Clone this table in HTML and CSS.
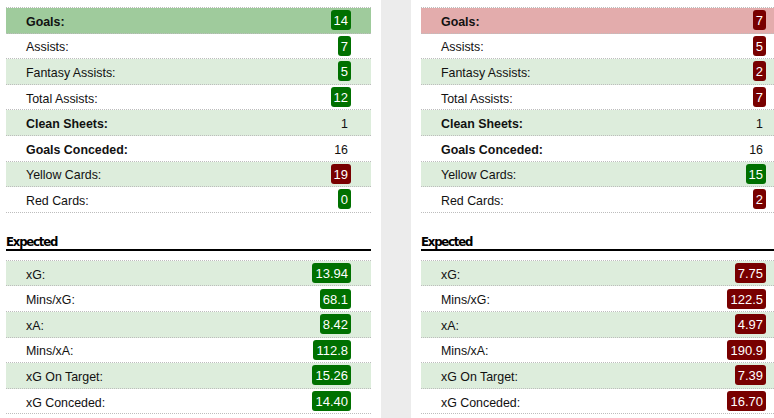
FILE: index.html
```html
<!DOCTYPE html>
<html lang="en">
<head>
    <meta charset="UTF-8">
    <meta name="viewport" content="width=device-width, initial-scale=1.0">
    <title>Player Comparison</title>
    <link rel="stylesheet" href="styles.css">
</head>
<body>
    <div class="compare">
        <!-- Player one -->
        <section class="player">
            <div class="stat-list">
                <div class="stat-row top-good bold"><span>Goals:</span><span class="badge good">14</span></div>
                <div class="stat-row"><span>Assists:</span><span class="badge good">7</span></div>
                <div class="stat-row alt"><span>Fantasy Assists:</span><span class="badge good">5</span></div>
                <div class="stat-row"><span>Total Assists:</span><span class="badge good">12</span></div>
                <div class="stat-row alt bold"><span>Clean Sheets:</span><span class="plain">1</span></div>
                <div class="stat-row bold"><span>Goals Conceded:</span><span class="plain">16</span></div>
                <div class="stat-row alt"><span>Yellow Cards:</span><span class="badge bad">19</span></div>
                <div class="stat-row"><span>Red Cards:</span><span class="badge good">0</span></div>
            </div>

            <h3 class="section-title">Expected</h3>
            <div class="stat-list">
                <div class="stat-row alt"><span>xG:</span><span class="badge good">13.94</span></div>
                <div class="stat-row"><span>Mins/xG:</span><span class="badge good">68.1</span></div>
                <div class="stat-row alt"><span>xA:</span><span class="badge good">8.42</span></div>
                <div class="stat-row"><span>Mins/xA:</span><span class="badge good">112.8</span></div>
                <div class="stat-row alt"><span>xG On Target:</span><span class="badge good">15.26</span></div>
                <div class="stat-row"><span>xG Conceded:</span><span class="badge good">14.40</span></div>
            </div>
        </section>

        <!-- Player two -->
        <section class="player">
            <div class="stat-list">
                <div class="stat-row top-bad bold"><span>Goals:</span><span class="badge bad">7</span></div>
                <div class="stat-row"><span>Assists:</span><span class="badge bad">5</span></div>
                <div class="stat-row alt"><span>Fantasy Assists:</span><span class="badge bad">2</span></div>
                <div class="stat-row"><span>Total Assists:</span><span class="badge bad">7</span></div>
                <div class="stat-row alt bold"><span>Clean Sheets:</span><span class="plain">1</span></div>
                <div class="stat-row bold"><span>Goals Conceded:</span><span class="plain">16</span></div>
                <div class="stat-row alt"><span>Yellow Cards:</span><span class="badge good">15</span></div>
                <div class="stat-row"><span>Red Cards:</span><span class="badge bad">2</span></div>
            </div>

            <h3 class="section-title">Expected</h3>
            <div class="stat-list">
                <div class="stat-row alt"><span>xG:</span><span class="badge bad">7.75</span></div>
                <div class="stat-row"><span>Mins/xG:</span><span class="badge bad">122.5</span></div>
                <div class="stat-row alt"><span>xA:</span><span class="badge bad">4.97</span></div>
                <div class="stat-row"><span>Mins/xA:</span><span class="badge bad">190.9</span></div>
                <div class="stat-row alt"><span>xG On Target:</span><span class="badge bad">7.39</span></div>
                <div class="stat-row"><span>xG Conceded:</span><span class="badge bad">16.70</span></div>
            </div>
        </section>
    </div>
</body>
</html>
```

FILE: styles.css
```css
body {
  margin: 0;
  padding: 0;
  background: #fff;
  color: #111;
  font-family: "Liberation Sans", Arial, sans-serif;
  font-size: 12.4px;
  overflow: hidden;
}

.compare {
  display: flex;
  gap: 30px;
  margin-left: -4px;
  width: 800px;
  background: #ececec;
}

.player {
  flex: 0 0 365px;
  background: #fff;
  padding: 7px 10px 20px;
}

.stat-list {
  border-top: 1px dotted #bdbdbd;
}

.stat-row {
  display: flex;
  align-items: center;
  justify-content: space-between;
  height: 24.6px;
  padding: 0 20px;
  border-bottom: 1px dotted #bdbdbd;
}

.stat-row span:first-child {
  padding-top: 3px;
}

.stat-row.alt {
  background: #ddeddc;
}

.stat-row.top-good {
  background: #9fcb9c;
}

.stat-row.top-bad {
  background: #e3acac;
}

.stat-row.bold span:first-child {
  font-weight: bold;
}

.badge {
  display: inline-block;
  min-width: 7px;
  height: 20px;
  line-height: 21px;
  padding: 0 3px;
  border-radius: 3px;
  font-size: 13px;
  color: #fff;
  text-align: center;
}

.badge.good {
  background: #007000;
}

.badge.bad {
  background: #780000;
}

.plain {
  padding-top: 3px;
  padding-right: 3px;
}

.section-title {
  margin: 21px 0 9px;
  padding-bottom: 0;
  font-family: "DejaVu Sans Condensed", "DejaVu Sans", sans-serif;
  font-size: 13px;
  font-weight: bold;
  line-height: 15px;
  letter-spacing: -1.2px;
  border-bottom: 2px solid #000;
  color: #000;
}
```
